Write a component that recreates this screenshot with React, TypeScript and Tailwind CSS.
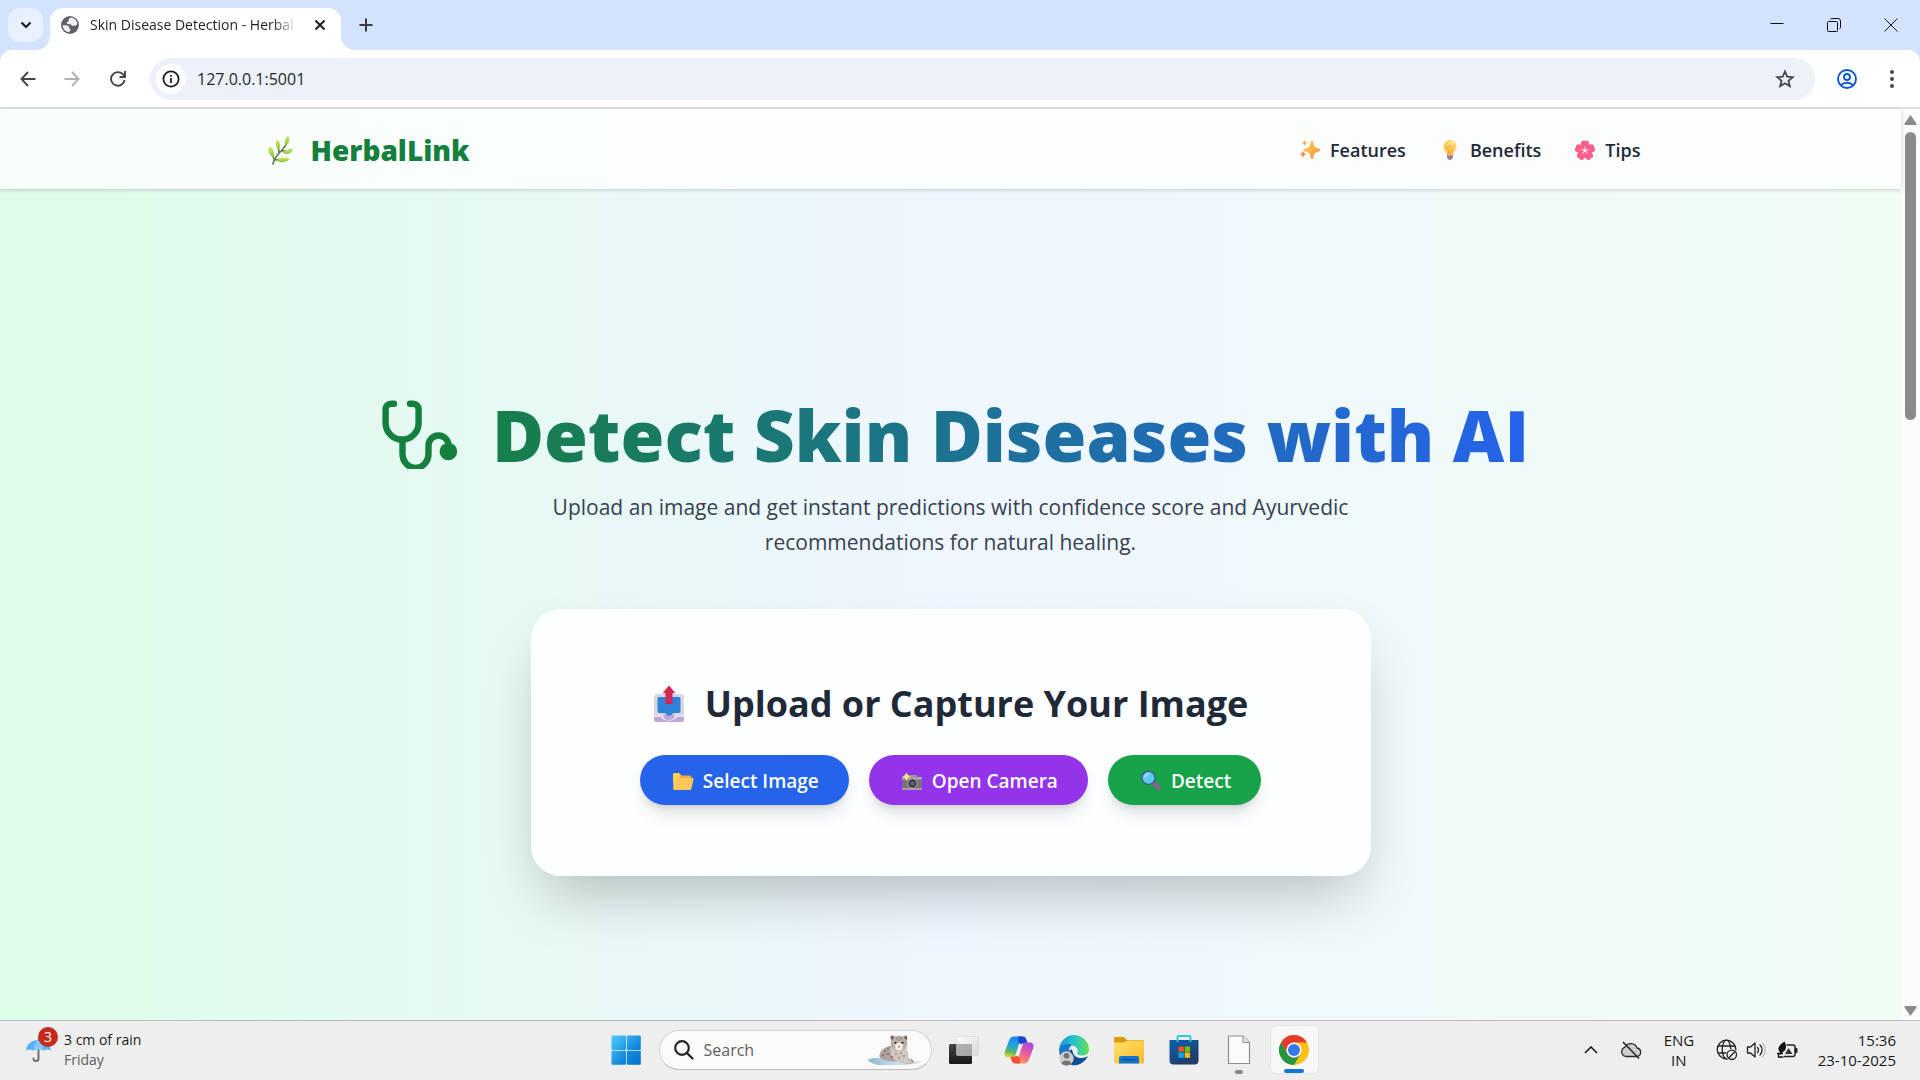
import React from 'react';

type IconProps = { className?: string };

/* ---------- page illustrations ---------- */

const Leaf = ({ className }: IconProps) => (
  <svg viewBox="0 0 30 32" className={className} aria-hidden="true">
    <defs>
      <linearGradient id="leafG" x1="0" y1="0" x2="0" y2="1">
        <stop offset="0" stopColor="#d5f05c" />
        <stop offset="1" stopColor="#84c341" />
      </linearGradient>
    </defs>
    <path d="M8 30C9 24 13 20 17 16C20 13 22 9 23 6M9 25C8 22 7 20 6 17M14 19C14 15 13 13 13 10M17 17C20 17 23 17 26 16M10 26C14 25 18 26 22 26" fill="none" stroke="#5f7f4b" strokeWidth="1.7" strokeLinecap="round" />
    <path d="M8.500 23.500C4 21 2 16 4.500 12.500C8.500 14 10 19 8.500 23.500Z" fill="url(#leafG)" />
    <path d="M13.500 15.500C10.500 13 10 8.500 12 5.500C15.500 8 16 12 13.500 15.500Z" fill="url(#leafG)" />
    <path d="M20.500 11.500C18.500 8.500 20 4 23 1.500C25.500 5 24.500 9.500 20.500 11.500Z" fill="url(#leafG)" />
    <path d="M17.500 18.500C20 15.500 24.500 15 28 16.500C26 20 21 21 17.500 18.500Z" fill="url(#leafG)" />
    <path d="M11.500 26.500C14.500 23.500 20.500 22.500 25 24.500C22.500 28.500 15.500 29.500 11.500 26.500Z" fill="url(#leafG)" />
  </svg>
);

const Sparkles = ({ className }: IconProps) => (
  <svg viewBox="0 0 24 24" className={className} aria-hidden="true">
    <defs>
      <linearGradient id="spkG" x1="0" y1="0" x2="1" y2="1">
        <stop offset="0" stopColor="#ffd45a" />
        <stop offset="1" stopColor="#f98a3c" />
      </linearGradient>
    </defs>
    <path d="M14 2.500C15 2.500 15.300 4.500 16 7C16.600 8.800 17.500 9.600 19.500 10.200C21.500 10.800 22.500 11 22.500 12C22.500 13 21.500 13.200 19.500 13.800C17.500 14.400 16.600 15.200 16 17C15.300 19.500 15 21.300 14 21.300C13 21.300 12.700 19.500 12 17C11.400 15.200 10.500 14.400 8.500 13.800C6.700 13.200 5.500 13 5.500 12C5.500 11 6.700 10.800 8.500 10.200C10.500 9.600 11.400 8.800 12 7C12.700 4.500 13 2.500 14 2.500Z" fill="url(#spkG)" />
    <path d="M6.500 2L7.400 4.300L9.500 5L7.400 5.800L6.500 8L5.600 5.800L3.500 5L5.600 4.300Z" fill="#fba14c" />
    <path d="M5 12.500L6 15.300L8.500 16.200L6 17.200L5 20L4 17.200L1.500 16.200L4 15.300Z" fill="#f98248" />
  </svg>
);

const Bulb = ({ className }: IconProps) => (
  <svg viewBox="0 0 24 24" className={className} aria-hidden="true">
    <defs>
      <radialGradient id="bulbG" cx="0.6" cy="0.3" r="0.8">
        <stop offset="0" stopColor="#ffe98a" />
        <stop offset="1" stopColor="#fcb63a" />
      </radialGradient>
    </defs>
    <path d="M12 2A6.500 6.500 0 0 0 5.500 8.500C5.500 12 8.500 13.500 9 17H15C15.500 13.500 18.500 12 18.500 8.500A6.500 6.500 0 0 0 12 2Z" fill="url(#bulbG)" />
    <path d="M11 16L10 10.500A1.500 1.500 0 1 1 12 10A1.500 1.500 0 1 1 14 10.500L13 16" fill="none" stroke="#f39a1f" strokeWidth="0.9" />
    <path d="M9 17H15V19.500A1.500 1.500 0 0 1 13.700 21H10.300A1.500 1.500 0 0 1 9 19.500Z" fill="#b79bbd" />
    <path d="M9 18.800H15M10.500 21.200H13.500" stroke="#7f6691" strokeWidth="1.200" />
  </svg>
);

const Blossom = ({ className }: IconProps) => (
  <svg viewBox="0 0 24 24" className={className} aria-hidden="true">
    <g fill="#fb5f8a">
      {[0, 72, 144, 216, 288].map((a) => (
        <path key={a} transform={`rotate(${a} 12 12.500)`} d="M12 13C8 10 7 6 8.500 3.500C9.500 2 11 2.200 12 3C13 2.200 14.500 2 15.500 3.500C17 6 16 10 12 13Z" />
      ))}
      <circle cx="12" cy="12.500" r="5" />
    </g>
    <g stroke="#ffd3e0" strokeWidth="1" strokeLinecap="round">
      {[0, 72, 144, 216, 288].map((a) => (
        <path key={a} transform={`rotate(${a} 12 12.500)`} d="M12 12.500V8.800" />
      ))}
    </g>
    <circle cx="12" cy="12.500" r="1.600" fill="#fff0f4" />
  </svg>
);

const Stethoscope = ({ className }: IconProps) => (
  <svg viewBox="0 0 80 75" className={className} aria-hidden="true">
    <g fill="none" stroke="#15803d" strokeWidth="6.400" strokeLinecap="round">
      <path d="M14 9.800H11A5.400 5.400 0 0 0 5.600 15.200V29A16.500 16.500 0 0 0 38.600 29V15.200A5.400 5.400 0 0 0 33.200 9.800H30" />
      <path d="M22.500 46V60A13 14 0 0 0 48.500 60V52A10 10 0 0 1 68.500 51" />
    </g>
    <circle cx="68.400" cy="57.500" r="8.800" fill="#15803d" />
  </svg>
);

const Outbox = ({ className }: IconProps) => (
  <svg viewBox="0 0 32 40" className={className} aria-hidden="true">
    <defs>
      <linearGradient id="arrG" x1="0" y1="0" x2="1" y2="0">
        <stop offset="0" stopColor="#e8242f" />
        <stop offset="1" stopColor="#c22a7d" />
      </linearGradient>
    </defs>
    <rect x="1" y="10" width="30" height="28" rx="3" fill="#d9d5e2" />
    <path d="M1 31H31V35A3 3 0 0 1 28 38H4A3 3 0 0 1 1 35Z" fill="#bda6d8" />
    <path d="M1 30.500H9.500C11 35 13 36 16 36S21 35 22.500 30.500H31V33H24C22 38 10 38 8 33H1Z" fill="#e6e0ee" />
    <path d="M6 13H26A1.500 1.500 0 0 1 27.500 14.500V27A2 2 0 0 1 25.500 29H21C19 29 20 31.500 16 31.500S13 29 11 29H6.500A2 2 0 0 1 4.500 27V14.500A1.500 1.500 0 0 1 6 13Z" fill="#2d83d6" />
    <path d="M16 1.500L22.500 9.300H19.500V20H12.500V9.300H9.500Z" fill="url(#arrG)" />
  </svg>
);

const FolderOpen = ({ className }: IconProps) => (
  <svg viewBox="0 0 26 24" className={className} aria-hidden="true">
    <path d="M3 5.500A1.500 1.500 0 0 1 4.500 4H9L12 6.500H20A1.500 1.500 0 0 1 21.500 8V13H3Z" fill="#f4a93a" />
    <path d="M3 5.500A1.500 1.500 0 0 1 4.500 4H9L10.500 7L6 20H3.500Z" fill="#ffd04f" />
    <path d="M8.500 9H22.500A1.200 1.200 0 0 1 23.500 10.500L21.500 19.500A2 2 0 0 1 19.500 21H4.500A1.200 1.200 0 0 1 3.200 19.600L6.500 10.500A2 2 0 0 1 8.500 9Z" fill="#ffc65a" />
  </svg>
);

const Camera = ({ className }: IconProps) => (
  <svg viewBox="0 0 26 24" className={className} aria-hidden="true">
    <rect x="3" y="8" width="20" height="13" rx="1" fill="#77717f" />
    <rect x="3" y="8" width="20" height="2.500" rx="1" fill="#b3acb6" />
    <rect x="3" y="19" width="20" height="2" rx="1" fill="#a39caa" />
    <rect x="9" y="6" width="9" height="3.500" rx="1" fill="#9b95a0" />
    <circle cx="13.500" cy="14.500" r="5" fill="#bdb7c4" />
    <circle cx="13.500" cy="14.500" r="4.200" fill="#3b3744" />
    <circle cx="13.500" cy="14.500" r="2.300" fill="#675f78" />
    <path d="M7.500 3.500L9 6L11.500 7.500L9 9L7.500 12L6 9L3.500 7.500L6 6Z" fill="#ffe27a" />
  </svg>
);

const Magnifier = ({ className }: IconProps) => (
  <svg viewBox="0 0 26 24" className={className} aria-hidden="true">
    <path d="M15 13.500L21 19.500" stroke="#8e5f93" strokeWidth="4.200" strokeLinecap="round" />
    <circle cx="10.500" cy="8.800" r="6.600" fill="#5ccbf0" stroke="#4a5d8c" strokeWidth="1.500" />
    <path d="M7 8A4 4 0 0 1 10 5" stroke="#b9efff" strokeWidth="1.500" fill="none" strokeLinecap="round" />
  </svg>
);

/* ---------- browser chrome ---------- */

function TabStrip() {
  return (
    <div className="flex h-[50px] shrink-0 bg-[#d3e2fd]">
      <button aria-label="Search tabs" className="mt-2 ml-2 flex h-[34px] w-[35px] items-center justify-center rounded-xl bg-[#e9f0fe]">
        <svg viewBox="0 0 12 8" className="h-2 w-3" fill="none" stroke="#1f1f1f" strokeWidth="2.200"><path d="M1.500 1.500L6 6L10.500 1.500" /></svg>
      </button>
      <div className="relative mt-2 ml-[7px] flex h-[42px] w-[291px] items-center rounded-t-[13px] bg-white pb-2 pl-[11px]">
        <svg viewBox="0 0 14 14" className="absolute bottom-0 -left-3.5 size-3.5"><path d="M14 0V14H0A14 14 0 0 0 14 0Z" fill="#fff" /></svg>
        <svg viewBox="0 0 14 14" className="absolute -right-3.5 bottom-0 size-3.5"><path d="M0 0V14H14A14 14 0 0 1 0 0Z" fill="#fff" /></svg>
        <svg viewBox="0 0 18 18" className="size-[18px] shrink-0" aria-hidden="true">
          <circle cx="9" cy="9" r="9" fill="#5f6368" />
          <path d="M10 1.600C8 2 7.500 3 7.800 4.200C8.200 5.300 6 5.200 5.800 6.700C5.600 8 7 8.200 9 8.200C10.800 8.200 10.400 10 11.800 10C13.500 10 15.500 9 16.400 8.500C16.300 5 13.500 2 10 1.600ZM1.700 9.300C3.500 9 6.500 9 7.600 10.200C8.500 11.500 7.500 12.300 9 12.800C10.300 13.200 9.500 14.600 8 16.300C4.500 16 1.700 13 1.700 9.300Z" fill="#eceef0" />
        </svg>
        <span className="ml-[11px] w-[208px] overflow-hidden text-sm whitespace-nowrap text-[#1f1f1f] [mask-image:linear-gradient(to_right,#000_88%,transparent)]">Skin Disease Detection - Herbal</span>
        <button aria-label="Close tab" className="ml-2.5 flex size-6 items-center justify-center">
          <svg viewBox="0 0 12 12" className="size-3" stroke="#1f1f1f" strokeWidth="2"><path d="M1.500 1.500L10.500 10.500M10.500 1.500L1.500 10.500" /></svg>
        </button>
      </div>
      <button aria-label="New tab" className="ml-2.5 flex w-[30px] items-center justify-center">
        <svg viewBox="0 0 14 14" className="size-3.5" stroke="#3c3c3c" strokeWidth="2"><path d="M7 0.500V13.500M0.500 7H13.500" /></svg>
      </button>
      <div className="ml-auto flex">
        <button aria-label="Minimize" className="flex w-[57px] items-center justify-center">
          <svg viewBox="0 0 14 14" className="size-3.5" stroke="#111"><path d="M0.500 5.500H13.500" /></svg>
        </button>
        <button aria-label="Restore" className="flex w-[57px] items-center justify-center">
          <svg viewBox="0 0 14 14" className="size-3.5" fill="none" stroke="#111"><rect x="0.500" y="3.500" width="10" height="10" rx="1" /><path d="M3.500 1.500V1.500A1 1 0 0 1 4.500 0.500H11A2.500 2.500 0 0 1 13.500 3V9.500A1 1 0 0 1 12.500 10.500" /></svg>
        </button>
        <button aria-label="Close" className="mr-px flex w-[57px] items-center justify-center">
          <svg viewBox="0 0 14 14" className="size-3.5" stroke="#111"><path d="M0.500 0.500L13.500 13.500M13.500 0.500L0.500 13.500" /></svg>
        </button>
      </div>
    </div>
  );
}

function Toolbar() {
  return (
    <div className="shrink-0 bg-[#d3e2fd]">
      <div className="flex h-[59px] items-center rounded-t-xl border-b-2 border-[#dedfe0] bg-white pl-1.5">
        <button aria-label="Back" className="flex w-11 justify-center">
          <svg viewBox="0 0 16 16" className="size-4" fill="none" stroke="#454746" strokeWidth="1.900"><path d="M15.500 8H1.500M8 1L1.500 8L8 15" /></svg>
        </button>
        <button aria-label="Forward" className="flex w-11 justify-center">
          <svg viewBox="0 0 16 16" className="size-4" fill="none" stroke="#b0b1b1" strokeWidth="1.900"><path d="M0.500 8H14.500M8 1L14.500 8L8 15" /></svg>
        </button>
        <button aria-label="Reload" className="flex w-12 justify-center">
          <svg viewBox="0 0 16 16" className="size-4" fill="none" stroke="#454746" strokeWidth="1.900"><path d="M14.600 9A6.800 6.800 0 1 1 12.800 3.200L15 5.500M15 0V6H9.500" /></svg>
        </button>
        <form className="ml-2 flex h-[42px] flex-1 items-center rounded-full bg-[#ecf1fa] pr-5 pl-1.5" onSubmit={(e) => e.preventDefault()}>
          <button type="button" aria-label="Site information" className="flex size-[30px] items-center justify-center rounded-full bg-white">
            <svg viewBox="0 0 18 18" className="size-[18px]" fill="none" stroke="#1f1f1f" strokeWidth="1.800"><circle cx="9" cy="9" r="7.600" /><path d="M9 8V13M9 5V6.700" /></svg>
          </button>
          <input aria-label="Address" defaultValue="127.0.0.1:5001" className="ml-[11px] flex-1 bg-transparent text-base text-[#26282b] outline-none" />
          <button type="button" aria-label="Bookmark this tab">
            <svg viewBox="0 0 20 20" className="size-5" fill="none" stroke="#454746" strokeWidth="1.800"><path d="M10 2.500L12.200 7.600L17.700 8.100L13.500 11.700L14.800 17.100L10 14.200L5.200 17.100L6.500 11.700L2.300 8.100L7.800 7.600Z" /></svg>
          </button>
        </form>
        <button aria-label="Profile" className="ml-[22px]">
          <svg viewBox="0 0 20 20" className="size-5" fill="none" stroke="#0b57d0" strokeWidth="1.900"><circle cx="10" cy="10" r="9" /><circle cx="10" cy="8" r="3" /><path d="M3.800 16.300C7 12.900 13 12.900 16.200 16.300" /></svg>
        </button>
        <button aria-label="Menu" className="mr-[18px] ml-[25px] flex w-5 justify-center">
          <svg viewBox="0 0 4 18" className="h-[18px] w-1" fill="#454746"><circle cx="2" cy="2" r="2" /><circle cx="2" cy="9" r="2" /><circle cx="2" cy="16" r="2" /></svg>
        </button>
      </div>
    </div>
  );
}

/* ---------- page ---------- */

const links = [
  { label: 'Features', Icon: Sparkles },
  { label: 'Benefits', Icon: Bulb },
  { label: 'Tips', Icon: Blossom },
];

const actions = [
  { label: 'Select Image', Icon: FolderOpen, color: 'bg-[#2563eb]' },
  { label: 'Open Camera', Icon: Camera, color: 'bg-[#9333ea]' },
  { label: 'Detect', Icon: Magnifier, color: 'bg-[#16a34a]' },
];

function Site() {
  return (
    <div className="flex min-w-0 flex-1 flex-col bg-[linear-gradient(to_right,#dcfce7,#eff6ff_50%,#f0fdf4)]">
      <header className="z-10 shrink-0 bg-white/80 shadow-[0_1px_4px_rgba(0,0,0,0.18)]">
        <div className="mx-auto flex h-20 max-w-[1380px] items-center justify-between pt-0.5 pl-1">
          <a href="#home" className="flex items-center gap-4 text-[28px] font-extrabold text-[#15803d]">
            <Leaf className="h-8 w-[30px]" />
            HerbalLink
          </a>
          <nav className="flex gap-8">
            {links.map(({ label, Icon }) => (
              <a key={label} href={'#' + label.toLowerCase()} className="flex items-center gap-2 text-lg font-semibold text-[#1f2937]">
                <Icon className="size-6" />
                {label}
              </a>
            ))}
          </nav>
        </div>
      </header>
      <main className="flex flex-1 flex-col items-center pt-[205px] text-center">
        <div className="flex items-start gap-8 pl-2">
          <Stethoscope className="h-[75px] w-20" />
          <h1 className="bg-[linear-gradient(to_right,#167f49,#2563eb)] bg-clip-text text-[71px] leading-[82px] font-extrabold text-transparent">Detect Skin Diseases with AI</h1>
        </div>
        <p className="mt-3.5 w-[840px] max-w-full text-[21px] leading-[35px] text-[#374151]">
          Upload an image and get instant predictions with confidence score and Ayurvedic recommendations for natural healing.
        </p>
        <section className="mt-[49px] flex w-[840px] max-w-full flex-col items-center rounded-[30px] bg-white/90 pt-[70px] pb-[71px] shadow-[0_30px_60px_-15px_rgba(0,0,0,0.25)]">
          <h2 className="flex items-center gap-5 text-[36px] leading-[50px] font-bold text-[#1f2937]">
            <Outbox className="h-10 w-8" />
            Upload or Capture Your Image
          </h2>
          <div className="mt-[26px] flex gap-5">
            {actions.map(({ label, Icon, color }) => (
              <button key={label} className={`${color} flex h-[50px] items-center gap-[7px] rounded-full px-[30px] pt-0.5 text-[19px] font-semibold text-white shadow-[0_12px_18px_-4px_rgba(0,0,0,0.12),0_4px_7px_-3px_rgba(0,0,0,0.12)]`}>
                <Icon className="h-6 w-[26px]" />
                {label}
              </button>
            ))}
          </div>
        </section>
      </main>
    </div>
  );
}

function ScrollBar() {
  return (
    <div className="flex w-[19px] shrink-0 flex-col items-center bg-[#fcfcfc] py-1">
      <svg viewBox="0 0 13 10" className="mt-0.5 h-2.5 w-[13px]"><path d="M6.500 0L12.500 8.500Q13 10 11.500 10H1.500Q0 10 0.500 8.500Z" fill="#8b8b8b" /></svg>
      <div className="mt-[7px] h-[288px] w-[11px] rounded-full bg-[#8b8b8b]" />
      <svg viewBox="0 0 13 10" className="mt-auto h-2.5 w-[13px]"><path d="M6.500 10L12.500 1.500Q13 0 11.500 0H1.500Q0 0 0.500 1.500Z" fill="#8b8b8b" /></svg>
    </div>
  );
}

/* ---------- taskbar ---------- */

const Windows = () => (
  <svg viewBox="0 0 30 30" className="size-[30px]">
    <defs><linearGradient id="winG" x1="0" y1="0" x2="30" y2="30" gradientUnits="userSpaceOnUse"><stop offset="0" stopColor="#4fd0fd" /><stop offset="0.6" stopColor="#1389dd" /><stop offset="1" stopColor="#0370cc" /></linearGradient></defs>
    <g fill="url(#winG)"><rect width="14.500" height="14.500" x="0.500" y="0.500" rx="1" /><rect x="15.800" y="0.500" width="14" height="14.500" rx="1" /><rect x="0.500" y="15.800" width="14.500" height="14" rx="1" /><rect x="15.800" y="15.800" width="14" height="14" rx="1" /></g>
  </svg>
);

const SnowLeopard = () => (
  <svg viewBox="0 0 56 32" className="h-8 w-14" aria-hidden="true">
    <defs><linearGradient id="iceG" x1="0" y1="0" x2="1" y2="0"><stop offset="0" stopColor="#8fb7cf" /><stop offset="0.5" stopColor="#c5dcea" /><stop offset="1" stopColor="#d8edf8" /></linearGradient></defs>
    <path d="M0.500 26C5 23 12 24 18 24.500L38 27L55 27C52 30 45 31 36 31H15C8 31 4 29 0.500 26Z" fill="url(#iceG)" />
    <path d="M13 24C11 20 15 14 22 12L38 13C41 17 41 21 41 24C45 25 49 27 46 29C42 31 34 29 31 27C26 28 17 27 13 24Z" fill="#b0a29a" />
    <path d="M24 13L39 13C41 18 40 22 41 25C44 26 46 28 44 29C38 30 30 28 26 24C23 20 23 16 24 13Z" fill="#d3c8c1" />
    <path d="M23 2C24.500 0 27 1 28 2.500C30 1.500 34 1.500 36 2.500C37.500 0.500 40 1 40.500 3L40 8C41.500 12 38 17 32 17C26 17 22.500 12 24 8Z" fill="#b9aea8" />
    <path d="M28 10L32 8.500L36 10L35.500 15C34 17 30 17 28.500 15Z" fill="#f2edea" />
    <path d="M24 2.500L27 3L25 6ZM40 2.500L37 3L39.500 6Z" fill="#4b4140" />
    <g fill="#2e2929"><circle cx="28.500" cy="8.800" r="1.100" /><circle cx="35.500" cy="8.800" r="1.100" /></g>
    <path d="M30.700 12.300H33.300L32 14Z" fill="#b8545c" />
    <g fill="#6f635e"><circle cx="18" cy="17" r="0.900" /><circle cx="21" cy="20" r="0.900" /><circle cx="16" cy="21" r="0.900" /><circle cx="21" cy="15" r="0.800" /><circle cx="25" cy="23" r="0.900" /><circle cx="29" cy="20" r="0.700" /><circle cx="34" cy="19" r="0.700" /><circle cx="37" cy="22" r="0.800" /><circle cx="32" cy="24" r="0.800" /><circle cx="30" cy="4.500" r="0.700" /><circle cx="34" cy="4.500" r="0.700" /><circle cx="32" cy="6" r="0.600" /></g>
  </svg>
);

const TaskView = () => (
  <svg viewBox="0 0 32 32" className="size-8">
    <defs><linearGradient id="tvD" x1="0" y1="0" x2="0" y2="1"><stop offset="0" stopColor="#454545" /><stop offset="1" stopColor="#171717" /></linearGradient><linearGradient id="tvL" x1="0" y1="0" x2="1" y2="1"><stop offset="0" stopColor="#fff" /><stop offset="1" stopColor="#d4d4d4" /></linearGradient></defs>
    <rect x="1" y="10" width="23" height="20" rx="1.500" fill="url(#tvD)" />
    <rect x="8.500" y="2.500" width="22" height="19" rx="1" fill="url(#tvL)" fillOpacity="0.88" stroke="#d2d2d2" strokeWidth="0.600" />
    <path d="M8.500 10H24V21.500H8.500Z" fill="#8c8c8c" fillOpacity="0.55" />
  </svg>
);

const Copilot = () => (
  <svg viewBox="0 0 32 32" className="size-8">
    <defs>
      <linearGradient id="cpA" x1="0.500" y1="0" x2="0.300" y2="1"><stop offset="0" stopColor="#1785ee" /><stop offset="0.450" stopColor="#22a6d8" /><stop offset="0.750" stopColor="#61bd5b" /><stop offset="1" stopColor="#f0d32a" /></linearGradient>
      <linearGradient id="cpB" x1="0.700" y1="0" x2="0.300" y2="1"><stop offset="0" stopColor="#a34be6" /><stop offset="0.500" stopColor="#ee5a9c" /><stop offset="1" stopColor="#ff9a58" /></linearGradient>
    </defs>
    <path d="M19 2.500H11C8 2.500 6.500 4.500 5.500 8L2 17C0.500 21 2 23.500 5 23.500H9C12 23.500 12.500 21 13.500 18L17 7Z" fill="url(#cpA)" />
    <path d="M15 2.500H20C23 2.500 23.500 6 24.500 9L17 10L15.500 8Z" fill="#1842cf" />
    <path d="M13 29.500H21C24 29.500 25.500 27.500 26.500 24L30 15C31.500 11 30 8.500 27 8.500H23C20 8.500 19.500 11 18.500 14L15 25Z" fill="url(#cpB)" />
    <path d="M17 29.500H12C9 29.500 8.500 26.500 7.500 23L14.500 22L17 24Z" fill="#f4513d" />
  </svg>
);

const Edge = () => (
  <svg viewBox="0 0 32 32" className="size-8">
    <defs><linearGradient id="edA" x1="0" y1="0.500" x2="1" y2="0.500"><stop offset="0" stopColor="#1797d6" /><stop offset="0.500" stopColor="#2ac3cf" /><stop offset="1" stopColor="#67e04f" /></linearGradient></defs>
    <path d="M16 1A15 15 0 0 1 31 15C31 19.500 28 21.500 24.500 21.500C21 21.500 18.500 20.500 19.500 18.500C20.500 16 19 13 15 11.500C10 9.500 4 11 1.200 15.500A15 15 0 0 1 16 1Z" fill="url(#edA)" />
    <path d="M1.200 15C4 10 10 9 14.500 11C12 11.500 10.500 14.500 11 18C11.700 25 18 28 24 29A15 15 0 0 1 1.200 15Z" fill="#1575cf" />
    <path d="M11 18C12 15 14 15 14.500 17C15.500 24 23 26 30 22C27 28.500 20 31.500 15 31C10 29 10 22 11 18Z" fill="#104f96" />
    <circle cx="8.500" cy="24.500" r="7.200" fill="#cfcdcb" />
    <circle cx="8.500" cy="21.800" r="2.900" fill="#77736f" />
    <path d="M3.500 29.500C4 25.500 13 25.500 13.500 29.500C11 32 6 32 3.500 29.500Z" fill="#77736f" />
  </svg>
);

const Explorer = () => (
  <svg viewBox="0 0 32 32" className="size-8">
    <defs><linearGradient id="exG" x1="0" y1="0" x2="1" y2="1"><stop offset="0" stopColor="#ffdf70" /><stop offset="1" stopColor="#fdbb28" /></linearGradient></defs>
    <path d="M1 4.500A1.500 1.500 0 0 1 2.500 3H11L14 6H30A1 1 0 0 1 31 7V12H1Z" fill="#dc9a0b" />
    <path d="M1 8.500H11L14.500 6.500H31V28.500A1 1 0 0 1 30 29.500H2A1 1 0 0 1 1 28.500Z" fill="url(#exG)" />
    <path d="M6 29.500V24A2 2 0 0 1 8 22H24A2 2 0 0 1 26 24V29.500Z" fill="#1274cf" />
    <path d="M9.500 25.800H22.500" stroke="#074b91" strokeWidth="1.200" />
  </svg>
);

const Store = () => (
  <svg viewBox="0 0 32 32" className="size-8">
    <defs><linearGradient id="stG" x1="0" y1="0" x2="0.600" y2="1"><stop offset="0" stopColor="#0a62ad" /><stop offset="1" stopColor="#233a64" /></linearGradient></defs>
    <path d="M9.500 7.500V3A1 1 0 0 1 10.500 2H21.500A1 1 0 0 1 22.500 3V7.500" fill="none" stroke="#2cc3f5" strokeWidth="1.800" />
    <path d="M1.500 6H30.500V26.500A4 4 0 0 1 26.500 30.500H5.500A4 4 0 0 1 1.500 26.500Z" fill="url(#stG)" />
    <path d="M9.500 6V8M22.500 6V8" stroke="#2cc3f5" strokeWidth="1.800" />
    <rect x="10.500" y="12.500" width="5.300" height="5.300" fill="#f35325" /><rect x="16.700" y="12.500" width="5.300" height="5.300" fill="#81bc06" /><rect x="10.500" y="18.500" width="5.300" height="5.300" fill="#05a6f0" /><rect x="16.700" y="18.500" width="5.300" height="5.300" fill="#ffba08" />
  </svg>
);

const Page = () => (
  <svg viewBox="0 0 32 32" className="size-8">
    <path d="M5.500 2H20L26.500 8.500V29.500H5.500Z" fill="#fbfbfb" stroke="#8f8f8f" strokeWidth="1.200" />
    <path d="M20 2V8.500H26.500" fill="#e9e9e9" stroke="#8f8f8f" />
  </svg>
);

const Chrome = () => (
  <svg viewBox="0 0 32 32" className="size-8">
    <circle cx="16" cy="16" r="15" fill="#fbc116" />
    <path d="M3 8.500A15 15 0 0 1 29 8.500H16A7.500 7.500 0 0 0 9.500 19.700Z" fill="#e33b2e" />
    <path d="M3 8.500L9.500 19.750A7.500 7.500 0 0 0 22.500 19.750L16 31A15 15 0 0 1 3 8.500Z" fill="#269546" />
    <circle cx="16" cy="16" r="7.500" fill="#fff" />
    <circle cx="16" cy="16" r="6" fill="#3179ec" />
  </svg>
);

const apps = [
  { name: 'Task view', Icon: TaskView },
  { name: 'Copilot', Icon: Copilot },
  { name: 'Edge', Icon: Edge },
  { name: 'File Explorer', Icon: Explorer },
  { name: 'Microsoft Store', Icon: Store },
];

function Taskbar() {
  return (
    <footer className="grid h-[60px] shrink-0 grid-cols-[1fr_auto_1fr] items-center border-t border-[#b9bbbd] bg-[#eeeeee] pb-0.5">
      <button className="flex items-center pl-[26px] text-left leading-5">
        <span className="relative">
          <svg viewBox="0 0 26 26" className="size-[26px]" aria-hidden="true">
            <path d="M12.500 12V21.500A2.500 2.500 0 0 1 7.500 21.500" fill="none" stroke="#77706f" strokeWidth="2" strokeLinecap="round" />
            <path d="M12.500 2V4" stroke="#77706f" strokeWidth="1.500" />
            <path d="M0 13.500C1 6.500 6 3 12.500 3S24 6.500 25 13.500C23 12 20 12 17.500 13.500C15 12 10 12 7.500 13.500C5 12 2 12 0 13.500Z" fill="#58b0f5" />
            <path d="M7.500 13.500C7.500 9 9.500 5 12.500 3C15.500 5 17.500 9 17.500 13.500C15 12 10 12 7.500 13.500Z" fill="#86caff" />
          </svg>
          <span className="absolute -top-2.5 left-3 flex size-5 items-center justify-center rounded-full bg-[#c42b1c] text-sm text-white">3</span>
        </span>
        <span className="ml-3 text-sm leading-5">
          <span className="block text-[#1b1b1b]">3 cm of rain</span>
          <span className="block text-[#606060]">Friday</span>
        </span>
      </button>
      <div className="flex items-center">
        <button aria-label="Start" className="flex w-[55px] justify-center"><Windows /></button>
        <label className="mx-[5px] flex h-10 w-[273px] items-center rounded-full border border-[#d4d4d4] border-b-[#bcbcbc] bg-[#fafafa] pr-2 pl-3.5">
          <svg viewBox="0 0 20 20" className="size-5 shrink-0" fill="none" stroke="#222" strokeWidth="2.200"><circle cx="8" cy="8" r="6.800" /><path d="M13 13L18.500 18.500" strokeLinecap="round" /></svg>
          <input aria-label="Search" placeholder="Search" className="ml-2.5 w-0 flex-1 bg-transparent text-base outline-none placeholder:text-[#5f5f5f]" />
          <SnowLeopard />
        </label>
        {apps.map(({ name, Icon }) => (
          <button key={name} aria-label={name} className="flex w-[55px] justify-center"><Icon /></button>
        ))}
        <button aria-label="Document" className="relative flex w-[55px] justify-center">
          <Page />
          <span className="absolute -bottom-2 h-1 w-2 rounded-full bg-[#868686]" />
        </button>
        <button aria-label="Chrome" className="relative mx-[3px] flex size-[49px] items-center justify-center rounded-md border border-[#e5e5e5] bg-[#f8f8f8]">
          <Chrome />
          <span className="absolute bottom-0 h-1 w-5 rounded-full bg-[#0f78d4]" />
        </button>
      </div>
      <div className="flex items-center justify-end pr-6 text-[#1b1b1b]">
        <button aria-label="Hidden icons"><svg viewBox="0 0 14 8" className="h-2 w-3.5" fill="none" stroke="#1b1b1b" strokeWidth="1.600"><path d="M1 7L7 1L13 7" /></svg></button>
        <button aria-label="OneDrive" className="ml-[22px]">
          <svg viewBox="0 0 22 20" className="h-5 w-[22px]" fill="none" stroke="#2b2b2b" strokeWidth="1.300">
            <path d="M6 16.500A4.800 4.800 0 0 1 5 7.200A6.500 6.500 0 0 1 17 8A4.300 4.300 0 0 1 17 16.500Z" fill="#cfcfcf" /><path d="M3 2L19 18.500" strokeWidth="1.700" />
          </svg>
        </button>
        <button className="ml-[22px] w-[30px] text-center text-[15px] leading-5 whitespace-nowrap">ENG<br />IN</button>
        <button aria-label="Network, volume and battery" className="ml-[22px] flex items-center gap-2">
          <svg viewBox="0 0 22 22" className="size-[22px]" fill="none" stroke="#222" strokeWidth="1.300">
            <circle cx="10.500" cy="10.500" r="9.300" /><ellipse cx="10.500" cy="10.500" rx="4.300" ry="9.300" /><path d="M2 7H19M2 14H13" />
            <circle cx="15.800" cy="15.800" r="6" fill="#eeeeee" stroke="none" /><circle cx="15.800" cy="15.800" r="4.700" /><path d="M12.700 19L19 12.500" />
          </svg>
          <svg viewBox="0 0 22 18" className="h-[18px] w-[22px]" fill="none" stroke="#222" strokeWidth="1.300" strokeLinecap="round">
            <path d="M1.500 6H4.500L9 2V16L4.500 12H1.500Z" strokeLinejoin="round" /><path d="M11.500 6.500A3.500 3.500 0 0 1 11.500 11.500M14 4A7 7 0 0 1 14 14" /><path d="M16.500 2A10 10 0 0 1 16.500 16" stroke="#bdbdbd" />
          </svg>
          <svg viewBox="0 0 22 18" className="h-[18px] w-[22px]">
            <path d="M10.500 4H17A2 2 0 0 1 19 6V13A2 2 0 0 1 17 15.500H8" fill="none" stroke="#222" strokeWidth="1.500" /><path d="M19.500 7.500H21V11.500H19.500Z" fill="#222" stroke="#222" />
            <path d="M8.500 0.500C11 5 10.500 9.500 6 11.500L4 14L3 13L4 11C1 8.500 2 4.500 8.500 0.500Z" fill="#111" /><path d="M9 13L12.500 7L14.500 10L16.500 13Z" fill="#333" /><path d="M1 12.500H7M2.500 12.500V16H7.500" fill="none" stroke="#111" strokeWidth="1.300" />
          </svg>
        </button>
        <button className="ml-5 text-right text-[15px] leading-5">15:36<br />23-10-2025</button>
      </div>
    </footer>
  );
}

export default function App() {
  return (
    <div className="flex min-h-screen flex-col bg-white font-['Open_Sans','Noto_Sans',sans-serif]">
      <TabStrip />
      <Toolbar />
      <div className="flex flex-1">
        <Site />
        <ScrollBar />
      </div>
      <Taskbar />
    </div>
  );
}
